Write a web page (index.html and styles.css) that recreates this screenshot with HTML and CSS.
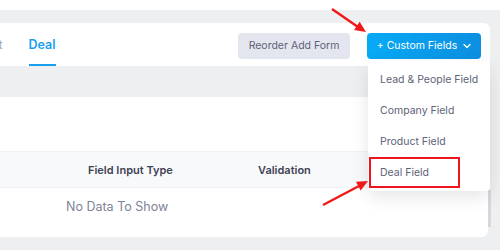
FILE: index.html
```html
<!DOCTYPE html>
<html lang="en">
<head>
    <meta charset="UTF-8">
    <meta name="viewport" content="width=device-width, initial-scale=1.0">
    <title>Custom Fields</title>
    <link rel="stylesheet" href="styles.css">
</head>
<body>
    <div class="topbar"></div>

    <div class="page">
        <!-- Tabs + actions -->
        <div class="card tabs-card">
            <div class="tabs">
                <a href="#" class="tab">Product</a>
                <a href="#" class="tab active">Deal</a>
            </div>
            <div class="actions">
                <button class="btn btn-light">Reorder Add Form</button>
                <div class="dropdown">
                    <button class="btn btn-primary">
                        <span>+ Custom Fields</span>
                        <svg width="8" height="6" viewBox="0 0 8 6"><path d="M1 1.5 L4 4.5 L7 1.5" fill="none" stroke="#fff" stroke-width="1.3" stroke-linecap="round" stroke-linejoin="round"/></svg>
                    </button>
                    <div class="dropdown-menu">
                        <a href="#" class="menu-item">Lead &amp; People Field</a>
                        <a href="#" class="menu-item">Company Field</a>
                        <a href="#" class="menu-item">Product Field</a>
                        <a href="#" class="menu-item highlight">Deal Field</a>
                    </div>
                </div>
            </div>
        </div>

        <!-- Fields table -->
        <div class="card table-card">
            <div class="table-head">
                <div></div>
                <div>Field Input Type</div>
                <div>Validation</div>
            </div>
            <div class="table-empty">No Data To Show</div>
            <div class="scrollbar"></div>
        </div>
    </div>

    <!-- annotation arrows -->
    <svg class="arrows" width="500" height="250" viewBox="0 0 500 250">
        <line x1="332" y1="9" x2="358" y2="27" stroke="#f01818" stroke-width="2.4"/>
        <polygon points="366,32 359.7,21.7 354.1,29.9" fill="#f01818"/>
        <line x1="323" y1="205" x2="359" y2="186" stroke="#f01818" stroke-width="2.4"/>
        <polygon points="368,181 360.6,190.6 356,181.8" fill="#f01818"/>
    </svg>
</body>
</html>
```

FILE: styles.css
```css
body {
    font-family: Inter, "Noto Sans", sans-serif;
    margin: 0;
    padding: 0;
    background-color: #eeeff1;
    width: 500px;
    height: 250px;
    overflow: hidden;
    position: relative;
}

.topbar {
    height: 10px;
    background-color: #fff;
}

.page {
    padding-top: 13px;
}

.card {
    background-color: white;
}

.tabs-card {
    height: 43px;
    margin-right: 10px;
    border-top-right-radius: 6px;
    display: flex;
    align-items: stretch;
    justify-content: space-between;
    position: relative;
    z-index: 2;
}

.tabs {
    display: flex;
    gap: 26px;
    margin-left: -45px;
}

.tab {
    display: flex;
    align-items: center;
    font-size: 12.5px;
    font-weight: 600;
    color: #a1a5b7;
    text-decoration: none;
    border-bottom: 2px solid transparent;
    padding-top: 2px;
}

.tab.active {
    color: #1a9ff0;
    border-bottom-color: #1a9ff0;
}

.actions {
    display: flex;
    align-items: center;
    gap: 17px;
    padding-top: 2px;
    padding-right: 9px;
}

.btn {
    height: 26px;
    border: none;
    border-radius: 4px;
    font-family: inherit;
    font-size: 10.5px;
    cursor: pointer;
    display: flex;
    align-items: center;
    justify-content: center;
}

.btn-light {
    width: 112px;
    background-color: #e4e6ef;
    color: #5e6278;
}

.btn-primary {
    width: 114px;
    gap: 6px;
    color: white;
    background: linear-gradient(90deg, #07aaf6, #0d8fe0);
}

.dropdown {
    position: relative;
}

.dropdown-menu {
    position: absolute;
    top: 28px;
    left: 1px;
    width: 122px;
    height: 130px;
    box-sizing: border-box;
    padding-top: 3px;
    background-color: white;
    border-radius: 4px;
    box-shadow: 0 6px 18px rgba(0, 0, 0, 0.1);
}

.menu-item {
    display: flex;
    align-items: center;
    height: 31px;
    padding-left: 12px;
    font-size: 10.5px;
    color: #5e6278;
    text-decoration: none;
}

.menu-item.highlight {
    width: 91px;
    margin-left: 1px;
    box-sizing: border-box;
    padding-left: 9px;
    border: 2px solid #f0141e;
}

.table-card {
    height: 140px;
    margin-top: 31px;
    margin-right: 12px;
    border-bottom-right-radius: 6px;
    padding-top: 54px;
    box-sizing: border-box;
    position: relative;
}

.table-head {
    display: grid;
    grid-template-columns: 88px 170px 1fr;
    align-items: center;
    height: 37px;
    background-color: #f8f9fb;
    border-top: 1px solid #f1f2f5;
    border-bottom: 1px solid #eff0f3;
    box-sizing: border-box;
    font-size: 11px;
    font-weight: 600;
    color: #3f4254;
}

.table-empty {
    padding: 11px 0 0 66px;
    font-size: 12.5px;
    color: #7e8299;
}

.scrollbar {
    position: absolute;
    right: -3px;
    top: 93px;
    width: 3px;
    height: 37px;
    background-color: #d6d7da;
}

.arrows {
    position: absolute;
    top: 0;
    left: 0;
    z-index: 5;
}
```
